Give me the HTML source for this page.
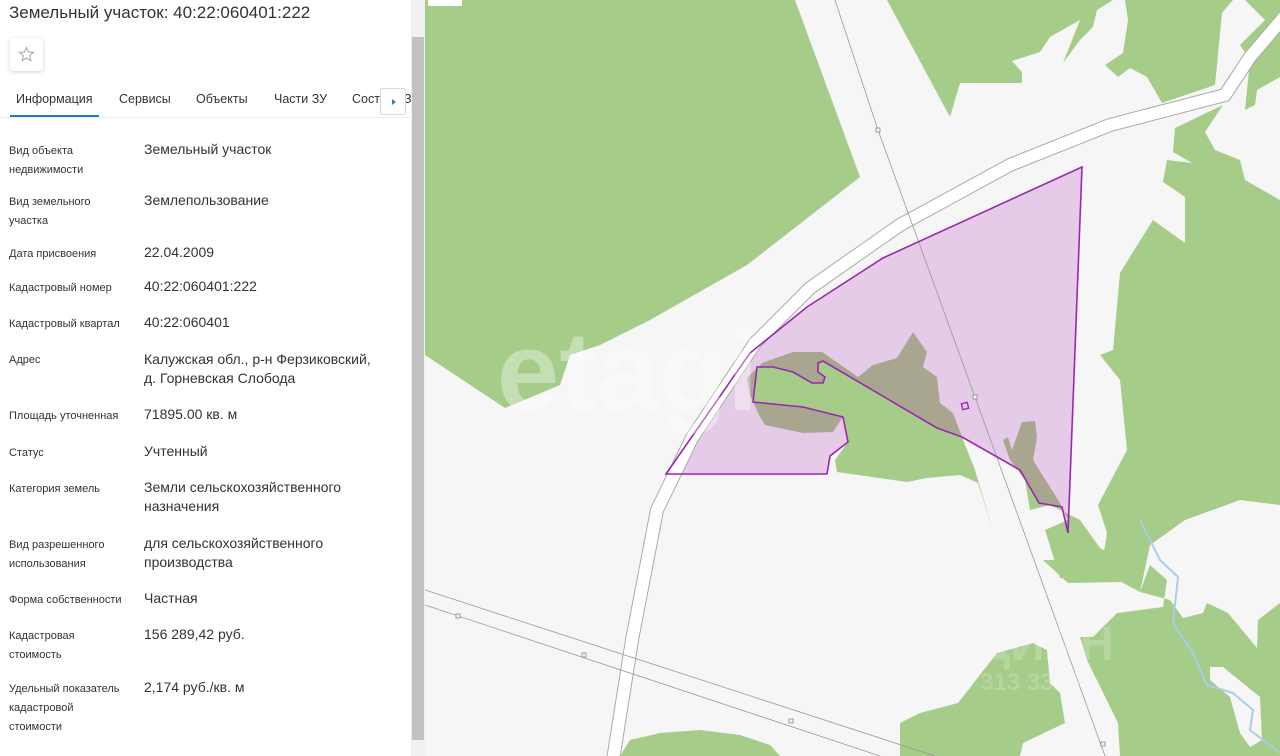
<!DOCTYPE html>
<html><head><meta charset="utf-8">
<style>
*{margin:0;padding:0;box-sizing:border-box}
body{width:1280px;height:756px;overflow:hidden;position:relative;background:#f6f6f6;font-family:"Liberation Sans","Noto Sans CJK SC",sans-serif;color:#333}
#panel{position:absolute;left:0;top:0;width:411px;height:756px;background:#fff}
.t{position:absolute;white-space:nowrap}
.lab{position:absolute;left:9px;font-size:11px;line-height:19px;color:#333;margin-top:2px}
.val{position:absolute;left:144px;font-size:14px;line-height:19px;color:#333;margin-top:1px}
#sb{position:absolute;left:411px;top:0;width:14px;height:756px;background:#f1f1f1}
#thumb{position:absolute;left:412px;top:37px;width:12px;height:703px;background:#c1c1c1}
#map{position:absolute;left:425px;top:0}
</style></head><body>
<div id="panel">
  <div class="t" style="left:9px;top:3px;font-size:17px;color:#333">Земельный участок: 40:22:060401:222</div>
  <div style="position:absolute;left:10px;top:38px;width:33px;height:33px;background:#fff;border-radius:3px;box-shadow:0 1px 4px rgba(0,0,0,.18)">
    <svg width="33" height="33" viewBox="0 0 33 33"><path d="M16.5 9.5l2 4.6 4.9.4-3.7 3.2 1.1 4.9-4.3-2.6-4.3 2.6 1.1-4.9-3.7-3.2 4.9-.4z" fill="none" stroke="#aaa" stroke-width="1.1"/></svg>
  </div>
  <div class="t" style="left:16px;top:92px;font-size:12.5px">Информация</div>
  <div class="t" style="left:119px;top:92px;font-size:12.5px">Сервисы</div>
  <div class="t" style="left:196px;top:92px;font-size:12.5px">Объекты</div>
  <div class="t" style="left:274px;top:92px;font-size:12.5px">Части ЗУ</div>
  <div class="t" style="left:352px;top:92px;font-size:12.5px">Сост</div>
  <div class="t" style="left:404px;top:92px;font-size:12.5px">З</div>
  <div style="position:absolute;left:380px;top:88px;width:26px;height:27px;background:#fff;border:1px solid #cfd8e3;border-radius:3px"><svg width="24" height="25"><path d="M11 10l4 3-4 3z" fill="#2b7bd6"/></svg></div>
  <div style="position:absolute;left:0;top:117px;width:411px;height:1px;background:#eee"></div>
  <div style="position:absolute;left:10px;top:115px;width:89px;height:2px;background:#1f78d1"></div>

  <div class="lab" style="top:140px">Вид объекта<br>недвижимости</div><div class="val" style="top:139px">Земельный участок</div>
  <div class="lab" style="top:191px">Вид земельного<br>участка</div><div class="val" style="top:190px">Землепользование</div>
  <div class="lab" style="top:243px">Дата присвоения</div><div class="val" style="top:242px">22.04.2009</div>
  <div class="lab" style="top:277px">Кадастровый номер</div><div class="val" style="top:276px">40:22:060401:222</div>
  <div class="lab" style="top:313px">Кадастровый квартал</div><div class="val" style="top:312px">40:22:060401</div>
  <div class="lab" style="top:349px">Адрес</div><div class="val" style="top:349px">Калужская обл., р-н Ферзиковский,<br>д. Горневская Слобода</div>
  <div class="lab" style="top:405px">Площадь уточненная</div><div class="val" style="top:404px">71895.00 кв. м</div>
  <div class="lab" style="top:442px">Статус</div><div class="val" style="top:441px">Учтенный</div>
  <div class="lab" style="top:478px">Категория земель</div><div class="val" style="top:477px">Земли сельскохозяйственного<br>назначения</div>
  <div class="lab" style="top:534px">Вид разрешенного<br>использования</div><div class="val" style="top:533px">для сельскохозяйственного<br>производства</div>
  <div class="lab" style="top:589px">Форма собственности</div><div class="val" style="top:588px">Частная</div>
  <div class="lab" style="top:625px">Кадастровая<br>стоимость</div><div class="val" style="top:624px">156 289,42 руб.</div>
  <div class="lab" style="top:678px">Удельный показатель<br>кадастровой<br>стоимости</div><div class="val" style="top:677px">2,174 руб./кв. м</div>
</div>
<div id="sb"></div><div id="thumb"></div>

<svg id="map" width="855" height="756" viewBox="425 0 855 756">
  <defs>
    <clipPath id="pc"><polygon points="666,474 750,353 807,307 883,258 1082,167 1068,533 1062,507 1039,503 1020,470 962,437 937,428 823,361 818,363 818,372 825,377 823,383 812,383 793,372 773,367 757,367 753,402 803,407 843,417 848,442 830,456 827,474"/></clipPath>
    <g id="mg">
      <polygon points="747,378 762,363 793,352 822,352 858,377 873,365 897,358 913,332 927,352 923,367 937,377 940,403 953,413 962,437 975,470 993,530 978,483 960,475 927,478 907,482 837,472 835,460 848,442 843,417 833,432 803,433 765,425 760,417 750,395"/>
      <polygon points="1003,440 1008,437 1012,450 1022,422 1035,421 1037,437 1033,460 1060,503 1068,520 1045,530 1060,578 1120,582 1122,560 1100,548 1080,520 1050,505 1030,510 1025,480 1010,460"/>
    </g>
  </defs>
  <rect x="425" y="0" width="855" height="756" fill="#f6f6f6"/>
  <g fill="#a6cc8a">
    <polygon points="425,0 795,0 860,177 747,265 650,320 600,345 570,355 560,385 505,408 425,355"/>
    <polygon points="887,0 950,117 960,83 1022,83 1022,72 1012,61 1040,52 1050,37 1080,20 1063,63 1080,40 1093,27 1097,10 1113,0"/>
    <polygon points="1125,0 1233,0 1222,13 1215,85 1162,103 1147,77 1130,68 1118,77 1105,65 1123,53 1128,20"/>
    <polygon points="1245,0 1280,0 1280,77 1257,90 1255,105 1245,110 1250,60 1240,45 1265,20"/>
    <polygon points="1223,105 1175,128 1173,152 1192,163 1167,160 1163,182 1185,197 1185,243 1153,220 1120,273 1113,350 1100,355 1120,380 1127,450 1098,505 1107,533 1101,571 1140,592 1150,545 1185,520 1240,500 1280,505 1280,200 1245,180 1240,160 1215,150 1205,132"/>
    <polygon points="1080,637 1093,637 1117,613 1163,607 1167,580 1150,565 1140,592 1170,600 1183,618 1203,613 1207,603 1228,613 1257,648 1258,620 1280,603 1280,756 1120,756 1118,723 1087,660"/>
    <polygon points="1043,560 1068,583 1123,582 1120,560"/>
    <polygon points="900,723 920,713 958,703 997,653 1033,643 1047,650 1050,683 1060,693 1065,723 1023,743 1020,756 900,756"/>
    <polygon points="620,756 630,740 660,733 700,730 740,735 770,745 780,756"/>
    <use href="#mg"/>
  </g>
  <polygon points="1210,667 1223,667 1260,697 1262,740 1250,747 1240,733 1230,697 1210,680" fill="#f6f6f6"/>
  <polyline points="1140,520 1160,560 1178,577 1173,623 1193,653 1207,685 1233,693 1253,710 1250,730 1280,753" fill="none" stroke="#a9cdea" stroke-width="2"/>
  <polygon points="666,474 750,353 807,307 883,258 1082,167 1068,533 1062,507 1039,503 1020,470 962,437 937,428 823,361 818,363 818,372 825,377 823,383 812,383 793,372 773,367 757,367 753,402 803,407 843,417 848,442 830,456 827,474" fill="#e6cbe8"/>
  <g clip-path="url(#pc)" fill="#a9a690"><use href="#mg"/></g>
  <g fill="none" stroke-linejoin="round">
    <polyline points="1290,10 1250,57 1225,95 1110,125 1010,165 900,225 810,288 755,343 692,438 657,510 632,640 613,760" stroke="#aaa" stroke-width="14"/>
    <polyline points="1290,10 1250,57 1225,95 1110,125 1010,165 900,225 810,288 755,343 692,438 657,510 632,640 613,760" stroke="#fff" stroke-width="12"/>
  </g>
  <g stroke="#999" stroke-width="0.8" fill="none">
    <polyline points="835,0 878,130 975,397 1105,756"/>
    <line x1="425" y1="590" x2="935" y2="756"/>
    <line x1="425" y1="605" x2="880" y2="756"/>
  </g>
  <g fill="#f6f6f6" stroke="#888" stroke-width="0.8">
    <rect x="876" y="128" width="4" height="4"/><rect x="973" y="395" width="4" height="4"/>
    <rect x="456" y="614" width="4" height="4"/><rect x="582" y="653" width="4" height="4"/>
    <rect x="789" y="719" width="4" height="4"/><rect x="1101" y="742" width="4" height="4"/>
  </g>
  <polygon points="666,474 750,353 807,307 883,258 1082,167 1068,533 1062,507 1039,503 1020,470 962,437 937,428 823,361 818,363 818,372 825,377 823,383 812,383 793,372 773,367 757,367 753,402 803,407 843,417 848,442 830,456 827,474" fill="none" stroke="#9b27b0" stroke-width="1.6"/>
  <rect x="962" y="403" width="6" height="6" transform="rotate(-15 965 406)" fill="none" stroke="#9b27b0" stroke-width="1.4"/>
  <text x="497" y="410" font-family="Liberation Sans" font-weight="bold" font-size="112" fill="#fff" fill-opacity="0.35">etagi</text>
  <text x="975" y="660" font-family="Liberation Sans" font-weight="bold" font-size="48" fill="#fff" fill-opacity="0.18">ЦИАН</text>
  <text x="960" y="690" font-family="Liberation Sans" font-weight="bold" font-size="24" fill="#fff" fill-opacity="0.18">0 313 3369</text>
  <rect x="428" y="-4" width="34" height="10" rx="2" fill="#fff"/>
</svg>
</body></html>
